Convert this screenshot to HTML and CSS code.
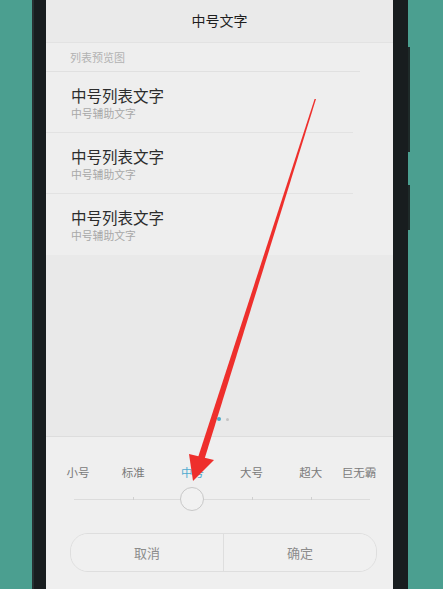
FILE: index.html
```html
<!DOCTYPE html>
<html lang="zh-CN">
<head>
    <meta charset="UTF-8">
    <meta name="viewport" content="width=device-width, initial-scale=1.0">
    <title>中号文字</title>
    <link rel="stylesheet" href="styles.css">
</head>
<body>
    <div class="phone">
        <span class="side-key key-up"></span>
        <span class="side-key key-down"></span>

        <div class="screen">
            <div class="title-bar">中号文字</div>

            <div class="preview">
                <div class="section-label">列表预览图</div>
                <div class="list-item">
                    <p class="item-title">中号列表文字</p>
                    <p class="item-sub">中号辅助文字</p>
                </div>
                <div class="list-item">
                    <p class="item-title">中号列表文字</p>
                    <p class="item-sub">中号辅助文字</p>
                </div>
                <div class="list-item last">
                    <p class="item-title">中号列表文字</p>
                    <p class="item-sub">中号辅助文字</p>
                </div>
                <div class="blank">
                    <div class="dots">
                        <span class="dot active"></span>
                        <span class="dot"></span>
                    </div>
                </div>
            </div>

            <div class="size-panel">
                <div class="size-labels">
                    <span class="first">小号</span>
                    <span>标准</span>
                    <span class="current">中号</span>
                    <span>大号</span>
                    <span>超大</span>
                    <span class="last">巨无霸</span>
                </div>
                <div class="slider">
                    <div class="track">
                        <i class="tick" style="left: 20%"></i>
                        <i class="tick" style="left: 60%"></i>
                        <i class="tick" style="left: 80%"></i>
                        <span class="thumb" style="left: 40%"></span>
                    </div>
                </div>
                <div class="actions">
                    <button>取消</button>
                    <button>确定</button>
                </div>
            </div>
        </div>
    </div>

    <!-- flecha roja encima de la pantalla -->
    <svg class="arrow" width="443" height="589" viewBox="0 0 443 589">
        <polygon points="314.6,99 316,99 204.5,459 197.5,459" fill="#ee2f2c"/>
        <polygon points="189,454 214,460 193,481" fill="#ee2f2c"/>
    </svg>
</body>
</html>
```

FILE: styles.css
```css
body {
    margin: 0;
    padding: 0;
    height: 589px;
    overflow: hidden;
    background-color: #4b9f90;
    font-family: "Noto Sans CJK SC", "Noto Sans", sans-serif;
    position: relative;
}

.phone {
    position: relative;
    box-sizing: border-box;
    width: 376px;
    height: 589px;
    margin-left: 32px;
    padding: 0 15px 0 12px;
    background-color: #181d1f;
    border-left: 2px solid #273032;
}

.side-key {
    position: absolute;
    right: -2px;
    width: 2px;
    background-color: #1e2a29;
}

.key-up {
    top: 47px;
    height: 105px;
}

.key-down {
    top: 185px;
    height: 45px;
}

.screen {
    width: 347px;
    height: 589px;
    display: flex;
    flex-direction: column;
    background-color: #ececec;
}

.title-bar {
    box-sizing: border-box;
    height: 43px;
    border-bottom: 1px solid #e2e2e2;
    display: flex;
    align-items: center;
    justify-content: center;
    padding-bottom: 3px;
    font-size: 14px;
    color: #1e1e1e;
    background-color: #eaeaea;
}

.preview {
    display: flex;
    flex-direction: column;
    background-color: #eeeeee;
}

.section-label {
    height: 29px;
    box-sizing: border-box;
    padding: 6px 0 0 24px;
    font-size: 11px;
    line-height: 16px;
    color: #b2b2b2;
    border-bottom: 1px solid #e0e0e0;
    margin-right: 33px;
}

.list-item {
    height: 61px;
    box-sizing: border-box;
    padding: 13px 0 0 25px;
    margin-right: 40px;
    border-bottom: 1px solid #e2e2e2;
}

.list-item.last {
    border-bottom: none;
}

.item-title {
    margin: 0;
    font-size: 15.5px;
    line-height: 21px;
    color: #2c2c2c;
}

.item-sub {
    margin: 0;
    font-size: 10.8px;
    line-height: 15px;
    color: #a8a8a8;
}

.blank {
    height: 181px;
    display: flex;
    align-items: flex-end;
    justify-content: center;
    padding-bottom: 15px;
    box-sizing: border-box;
    background-color: #e9e9e9;
}

.dots {
    display: flex;
    align-items: center;
    gap: 5px;
    margin-left: 7px;
}

.dot {
    width: 3px;
    height: 3px;
    border-radius: 50%;
    background-color: #c4c4c4;
}

.dot.active {
    width: 4px;
    height: 4px;
    background-color: #4aa8c8;
}

.size-panel {
    flex: 1;
    border-top: 1px solid #dddddd;
    background-color: #efefef;
    padding-top: 27px;
}

/* seis columnas de 59.2px, una por cada paso del deslizador */
.size-labels {
    display: grid;
    grid-template-columns: repeat(6, 59.2px);
    justify-content: center;
    padding-left: 5px;
    font-size: 11.5px;
    line-height: 16px;
    color: #7a7a7a;
}

.size-labels span {
    text-align: center;
    white-space: nowrap;
}

.size-labels .first {
    padding-left: 8px;
}

.size-labels .last {
    padding-right: 22px;
}

.size-labels .current {
    color: #4fabcf;
}

.slider {
    display: flex;
    justify-content: center;
    padding-left: 5px;
    margin-top: 7px;
}

.track {
    position: relative;
    width: 296px;
    height: 24px;
    background: linear-gradient(#dcdcdc, #dcdcdc) no-repeat 0 12px / 100% 1px;
}

.tick {
    position: absolute;
    top: 10px;
    width: 1px;
    height: 3px;
    background-color: #cfcfcf;
}

.thumb {
    position: absolute;
    top: 0;
    width: 22px;
    height: 22px;
    margin-left: -12px;
    border: 1px solid #c8c8c8;
    border-radius: 50%;
    background-color: #f1f1f1;
}

.actions {
    display: flex;
    height: 37px;
    margin: 22px 16px 0 24px;
    border: 1px solid #dedede;
    border-radius: 18px;
    overflow: hidden;
}

.actions button {
    flex: 1;
    border: none;
    background-color: #f0f0f0;
    font-family: inherit;
    font-size: 13px;
    color: #8c8c8c;
    padding: 0;
}

.actions button + button {
    border-left: 1px solid #dedede;
}

.arrow {
    position: absolute;
    top: 0;
    left: 0;
    pointer-events: none;
}
```
